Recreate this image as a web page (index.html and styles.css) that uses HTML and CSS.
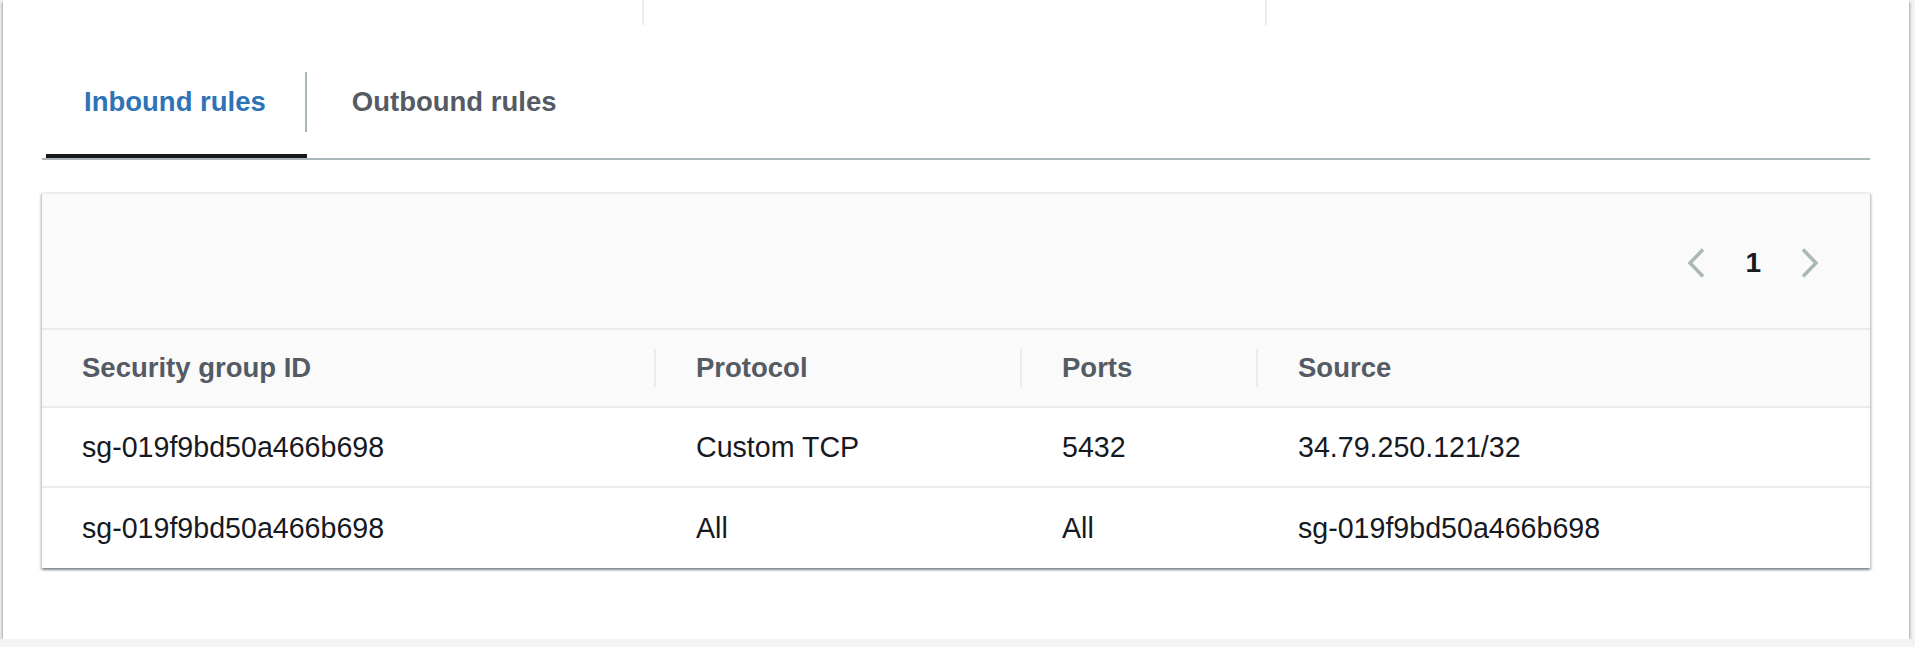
FILE: index.html
```html
<!DOCTYPE html>
<html lang="en">
<head>
<meta charset="utf-8">
<title>Security group rules</title>
<link rel="stylesheet" href="styles.css">
</head>
<body>
<div class="card">
  <div class="kv-grid">
    <div class="kv-col"></div>
    <div class="kv-col sep"></div>
    <div class="kv-col sep"></div>
  </div>

  <div class="tabs">
    <div class="tab active"><span class="tab-label first">Inbound rules</span></div>
    <div class="tab"><span class="tab-label">Outbound rules</span></div>
  </div>

  <div class="table-box">
    <div class="table-tools">
      <div class="pager">
        <svg class="chev" width="18" height="30" viewBox="0 0 18 30"><path d="M16 1.5 L3 15 L16 28.5" fill="none" stroke="#aab7b8" stroke-width="3.5"/></svg>
        <span class="page-num">1</span>
        <svg class="chev" width="18" height="30" viewBox="0 0 18 30"><path d="M2 1.5 L15 15 L2 28.5" fill="none" stroke="#aab7b8" stroke-width="3.5"/></svg>
      </div>
    </div>
    <div class="grid head">
      <div class="hcell first"><span>Security group ID</span></div>
      <div class="hcell"><span class="hsep">Protocol</span></div>
      <div class="hcell"><span class="hsep">Ports</span></div>
      <div class="hcell"><span class="hsep">Source</span></div>
    </div>
    <div class="grid row">
      <div class="cell first">sg-019f9bd50a466b698</div>
      <div class="cell">Custom TCP</div>
      <div class="cell">5432</div>
      <div class="cell">34.79.250.121/32</div>
    </div>
    <div class="grid row last">
      <div class="cell first">sg-019f9bd50a466b698</div>
      <div class="cell">All</div>
      <div class="cell">All</div>
      <div class="cell">sg-019f9bd50a466b698</div>
    </div>
  </div>
</div>
</body>
</html>
```

FILE: styles.css
```css
* { box-sizing: border-box; }

html, body {
  margin: 0;
  background: #f2f3f3;
}

body {
  padding: 0 6px 0 3px;
  font-family: "Liberation Sans", Arial, sans-serif;
  color: #16191f;
}

.card {
  background: #ffffff;
  padding: 0 39px 71px 39px;
  box-shadow: 0 2px 2px 0 rgba(0, 28, 36, 0.3),
              2px 2px 2px 0 rgba(0, 28, 36, 0.15),
              -2px 2px 2px 0 rgba(0, 28, 36, 0.15);
}

.kv-grid {
  display: grid;
  grid-template-columns: 600px 623px 1fr;
  height: 25px;
}

.kv-col.sep {
  border-left: 2px solid #eaeded;
}

.tabs {
  display: flex;
  margin-top: 25px;
  padding-left: 4px;
  border-bottom: 2px solid #aab7b8;
  margin-bottom: 32px;
}

.tab {
  padding: 22px 0;
  border-bottom: 4px solid transparent;
}

.tab.active {
  border-bottom-color: #16191f;
}

.tab-label {
  display: block;
  height: 60px;
  line-height: 60px;
  padding: 0 39px 0 38px;
  font-size: 27.5px;
  font-weight: 700;
  color: #545b64;
  white-space: nowrap;
}

.tab-label.first {
  border-right: 2px solid #aab7b8;
}

.tab.active .tab-label {
  color: #2e73b8;
}

.tab + .tab .tab-label {
  padding-left: 45px;
}

.table-box {
  background: #ffffff;
  border-top: 2px solid #eaeded;
  box-shadow: 0 2px 2px 0 rgba(0, 28, 36, 0.3),
              2px 2px 2px 0 rgba(0, 28, 36, 0.15),
              -2px 2px 2px 0 rgba(0, 28, 36, 0.15);
}

.table-tools {
  height: 136px;
  background: #fafafa;
  border-bottom: 2px solid #eaeded;
  display: flex;
  justify-content: flex-end;
  align-items: center;
  padding: 4px 51px 0 0;
}

.pager {
  display: flex;
  align-items: center;
  gap: 40px;
}

.chev {
  display: block;
}

.page-num {
  font-size: 28px;
  font-weight: 700;
  color: #16191f;
  line-height: 30px;
}

.grid {
  display: grid;
  grid-template-columns: 612px 366px 236px 1fr;
}

.head {
  height: 78px;
  background: #fafafa;
  border-bottom: 2px solid #eaeded;
  align-items: center;
}

.hcell {
  font-size: 27.5px;
  font-weight: 700;
  color: #545b64;
  white-space: nowrap;
}

.hcell.first {
  padding-left: 40px;
}

.hsep {
  display: block;
  height: 38px;
  line-height: 38px;
  border-left: 2px solid #eaeded;
  padding-left: 40px;
}

.row {
  height: 80px;
  border-bottom: 2px solid #eaeded;
  align-items: center;
}

.row.last {
  border-bottom: none;
}

.cell {
  font-size: 28.6px;
  color: #16191f;
  padding-left: 42px;
  white-space: nowrap;
}

.cell.first {
  padding-left: 40px;
}
```
